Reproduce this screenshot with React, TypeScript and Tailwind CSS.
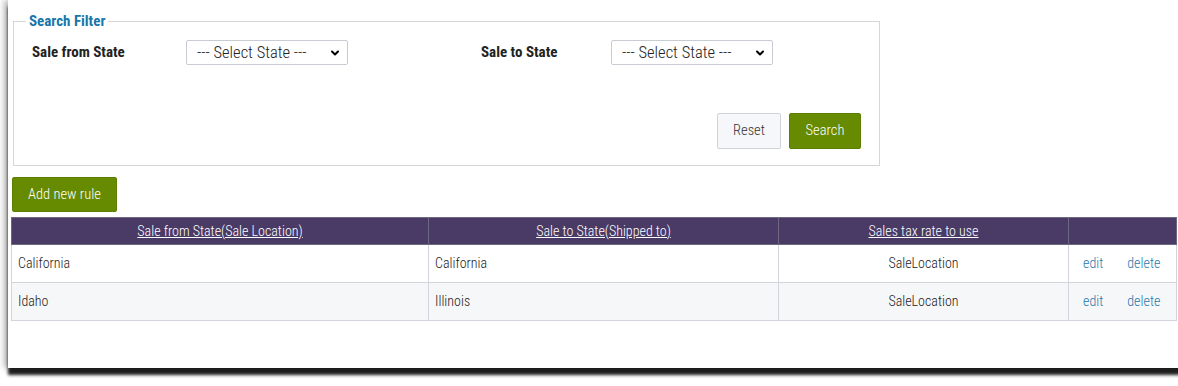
import { ChevronDown } from 'lucide-react';

const font = { fontFamily: '"Roboto Condensed", Roboto, sans-serif' };

const rows = [
  { from: 'California', to: 'California', rate: 'SaleLocation' },
  { from: 'Idaho', to: 'Illinois', rate: 'SaleLocation' },
];

function StateSelect() {
  return (
    <div className="relative w-[162px] h-[25px]">
      <select className="appearance-none w-full h-full border border-[#c8ccd2] rounded-[2px] bg-white pl-[10px] text-[16.5px] font-light text-[#222] outline-none">
        <option>--- Select State ---</option>
      </select>
      <ChevronDown className="absolute right-[7px] top-[7px] w-[12px] h-[12px] text-black pointer-events-none" strokeWidth={4} />
    </div>
  );
}

export default function App() {
  return (
    <div className="w-[1178px] h-[386px] bg-white overflow-hidden" style={font}>
      <div className="ml-[8px] w-[1180px] h-[368px] bg-white shadow-[0_7px_3px_rgba(0,0,0,0.88),-4px_0_6px_rgba(0,0,0,0.28)] pt-[11px]">
        {/* Search filter */}
        <fieldset className="ml-[5px] w-[867px] border border-[#d4d6da]">
          <legend className="ml-[12px] px-[3px] text-[15px] font-bold text-[#1877a9] leading-[20px]">Search Filter</legend>
          <div className="pl-[18px] pr-[18px] pb-[16px]">
            <div className="flex items-center mt-[9px]">
              <label className="w-[154px] text-[15px] font-bold text-[#222]">Sale from State</label>
              <StateSelect />
              <div className="w-[133px]" />
              <label className="w-[130px] text-[15px] font-bold text-[#222]">Sale to State</label>
              <StateSelect />
            </div>
            <div className="flex justify-end gap-[8px] mt-[48px]">
              <button className="w-[64px] h-[36px] bg-[#f5f7fa] border border-[#cfd3d8] rounded-[2px] text-[14.5px] font-light text-[#333]">Reset</button>
              <button className="w-[72px] h-[36px] bg-[#668a00] border border-[#5d7f00] rounded-[2px] text-[14.5px] font-light text-white">Search</button>
            </div>
          </div>
        </fieldset>

        <button className="ml-[4px] mt-[11px] w-[105px] h-[35px] bg-[#668a00] border border-[#5d7f00] rounded-[2px] text-[14.5px] font-light text-white">Add new rule</button>

        {/* Rules table */}
        <table className="ml-[3px] mt-[5px] w-[1166px] border-collapse text-[14px] font-light">
          <thead>
            <tr className="bg-[#4a3a66] text-white h-[27px]">
              <th className="w-[417px] border border-[#6d6880] font-light underline">Sale from State(Sale Location)</th>
              <th className="w-[350px] border border-[#6d6880] font-light underline">Sale to State(Shipped to)</th>
              <th className="w-[290px] border border-[#6d6880] font-light underline">Sales tax rate to use</th>
              <th className="border border-[#6d6880]" />
            </tr>
          </thead>
          <tbody>
            {rows.map((r, i) => (
              <tr key={i} className={`h-[38px] ${i % 2 ? 'bg-[#f6f7f9]' : 'bg-white'} text-[#222]`}>
                <td className="border border-[#d2d6dc] px-[6px]">{r.from}</td>
                <td className="border border-[#d2d6dc] px-[6px]">{r.to}</td>
                <td className="border border-[#d2d6dc] px-[6px] text-center">{r.rate}</td>
                <td className="border border-[#d2d6dc] pl-[14px] text-[#1e78ab]">
                  <a className="mr-[24px]">edit</a>
                  <a>delete</a>
                </td>
              </tr>
            ))}
          </tbody>
        </table>
      </div>
    </div>
  );
}
